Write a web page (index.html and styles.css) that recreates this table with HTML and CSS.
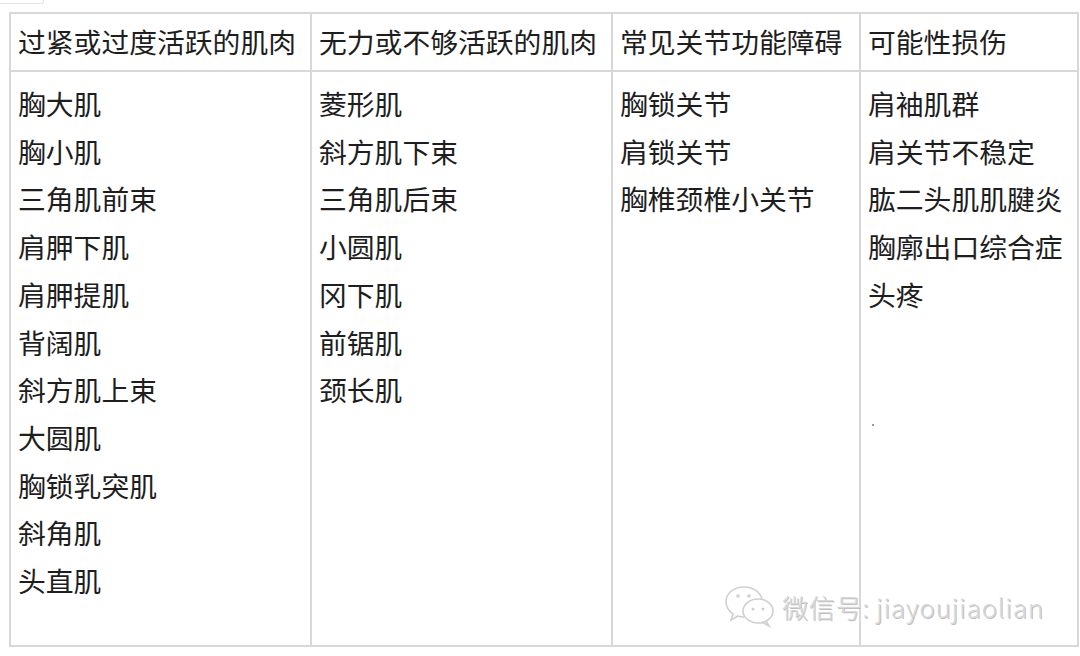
FILE: index.html
```html
<!DOCTYPE html>
<html lang="zh-CN">
<head>
<meta charset="utf-8">
<link rel="stylesheet" href="styles.css">
</head>
<body>
<div class="page">
  <div class="corner-box"></div>
  <table class="grid">
    <colgroup>
      <col class="c1"><col class="c2"><col class="c3"><col class="c4">
    </colgroup>
    <thead>
      <tr>
        <th>过紧或过度活跃的肌肉</th>
        <th>无力或不够活跃的肌肉</th>
        <th>常见关节功能障碍</th>
        <th>可能性损伤</th>
      </tr>
    </thead>
    <tbody>
      <tr>
        <td>
          <div>胸大肌</div><div>胸小肌</div><div>三角肌前束</div><div>肩胛下肌</div><div>肩胛提肌</div><div>背阔肌</div><div>斜方肌上束</div><div>大圆肌</div><div>胸锁乳突肌</div><div>斜角肌</div><div>头直肌</div>
        </td>
        <td>
          <div>菱形肌</div><div>斜方肌下束</div><div>三角肌后束</div><div>小圆肌</div><div>冈下肌</div><div>前锯肌</div><div>颈长肌</div>
        </td>
        <td>
          <div>胸锁关节</div><div>肩锁关节</div><div>胸椎颈椎小关节</div>
        </td>
        <td>
          <div>肩袖肌群</div><div>肩关节不稳定</div><div>肱二头肌肌腱炎</div><div>胸廓出口综合症</div><div>头疼</div>
        </td>
      </tr>
    </tbody>
  </table>
  <span class="dot"></span>
  <div class="watermark">
    <svg class="wm-icon" width="52" height="44" viewBox="0 0 52 44" aria-hidden="true">
      <path d="M20 3 C9 3 2 10 2 18 C2 23 5 27 9 30 L7 36 L14 32 C16 33 18 33 20 33" fill="none" stroke="#cfcfcf" stroke-width="1.6"/>
      <path d="M20 3 C30 3 37 9 38 16" fill="none" stroke="#cfcfcf" stroke-width="1.6"/>
      <ellipse cx="34" cy="27" rx="15" ry="12" fill="none" stroke="#cfcfcf" stroke-width="1.6"/>
      <path d="M42 37 L45 42 L38 38" fill="none" stroke="#cfcfcf" stroke-width="1.6"/>
      <circle cx="14" cy="12" r="1.8" fill="#cfcfcf"/>
      <circle cx="25" cy="12" r="1.8" fill="#cfcfcf"/>
      <circle cx="29" cy="25" r="1.5" fill="#cfcfcf"/>
      <circle cx="39" cy="25" r="1.5" fill="#cfcfcf"/>
    </svg>
    <span class="wm-text">微信号: jiayoujiaolian</span>
  </div>
</div>
</body>
</html>
```

FILE: styles.css
```css
html, body {
  margin: 0;
  padding: 0;
  background: #ffffff;
}

.page {
  position: relative;
  width: 1080px;
  height: 656px;
  overflow: hidden;
  padding: 12px 0 0 9px;
  box-sizing: border-box;
}

.corner-box {
  position: absolute;
  left: -4px;
  top: -10px;
  width: 46px;
  height: 12px;
  border: 1px solid #e2e2e2;
  border-radius: 3px;
}

.grid {
  border-collapse: collapse;
  table-layout: fixed;
  width: 1068px;
  font-family: "Noto Sans CJK SC", "Noto Sans", sans-serif;
  font-size: 27.8px;
  color: #1e1e1e;
}

.c1 { width: 301px; }
.c2 { width: 301px; }
.c3 { width: 248px; }
.c4 { width: 218px; }

.grid th,
.grid td {
  border: 2px solid #d8d8d8;
  text-align: left;
  vertical-align: top;
  padding: 0 0 0 7px;
  white-space: nowrap;
  overflow: visible;
  font-weight: 400;
  line-height: 47.7px;
}

.grid th {
  height: 58px;
  box-sizing: border-box;
  padding-top: 4px;
  padding-bottom: 4px;
}

.grid td {
  height: 575px;
  box-sizing: border-box;
  padding-top: 8px;
}

.dot {
  position: absolute;
  left: 872px;
  top: 424px;
  width: 2px;
  height: 2px;
  background: #777;
  border-radius: 1px;
}

.watermark {
  position: absolute;
  left: 724px;
  top: 584px;
  display: flex;
  align-items: center;
  gap: 6px;
}

.wm-text {
  font-family: "Noto Sans CJK SC", "Noto Sans", sans-serif;
  font-size: 26px;
  font-weight: 300;
  color: #d9d9d9;
  text-shadow: 1px 1px 0 #c0c0c0;
  letter-spacing: 0.75px;
}
```
